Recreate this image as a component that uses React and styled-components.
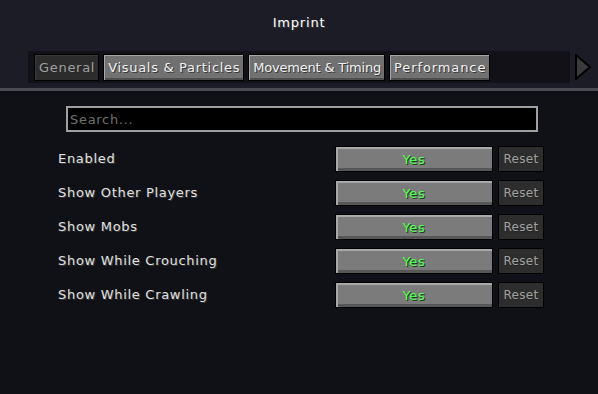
import { createGlobalStyle } from "styled-components"
import styled from "styled-components"

const GlobalStyle = createGlobalStyle`
  html, body {
    margin: 0;
    padding: 0;
    background: #101116;
  }
  body {
    font-family: "DejaVu Sans", "Liberation Sans", sans-serif;
    width: 598px;
    height: 394px;
    overflow: hidden;
  }
`

// spacing tuned so the tab widths line up with the pixel font widths
const tabs = [
  { label: "General", active: true, spacing: 0.7 },
  { label: "Visuals & Particles", spacing: 0.7 },
  { label: "Movement & Timing", spacing: -0.2 },
  { label: "Performance", spacing: 0.9 },
]

const options = [
  "Enabled",
  "Show Other Players",
  "Show Mobs",
  "Show While Crouching",
  "Show While Crawling",
]

export default function App() {
  return (
    <Screen>
      <GlobalStyle />
      <Header>
        <Title>Imprint</Title>
        <TabRow>
          <TabStrip>
            {tabs.map((t) => (
              <Tab key={t.label} $active={t.active} $spacing={t.spacing}>{t.label}</Tab>
            ))}
          </TabStrip>
          <Arrow width="16" height="26" viewBox="0 0 16 26">
            <path d="M1 1 L1 25 L15 13 Z" fill="#3a3a3c" stroke="#000" strokeWidth="2" strokeLinejoin="miter" />
          </Arrow>
        </TabRow>
      </Header>
      <Separator />
      <Body>
        <SearchBox>
          <SearchInput placeholder="Search..." />
        </SearchBox>
        <OptionList>
          {options.map((name) => (
            <OptionRow key={name}>
              <Label>{name}</Label>
              <ValueButton>Yes</ValueButton>
              <ResetButton>Reset</ResetButton>
            </OptionRow>
          ))}
        </OptionList>
      </Body>
    </Screen>
  )
}

const Screen = styled.div`
  width: 598px;
  height: 394px;
  display: flex;
  flex-direction: column;
  background: #101116;
`

const Header = styled.div`
  height: 88px;
  background: #1c1c26;
  display: flex;
  flex-direction: column;
  box-sizing: border-box;
  padding-top: 16px;
`

const Title = styled.div`
  text-align: center;
  color: #fff;
  font-size: 13px;
  letter-spacing: 0.8px;
  line-height: 14px;
  text-shadow: 1px 1px 0 #3f3f3f;
`

const TabRow = styled.div`
  margin-top: 21px;
  display: flex;
  align-items: center;
  padding-left: 28px;
  gap: 5px;
`

const TabStrip = styled.div`
  width: 542px;
  height: 32px;
  box-sizing: border-box;
  background: #111117;
  display: flex;
  align-items: center;
  gap: 4px;
  padding: 0 6px;
`

const Tab = styled.div`
  height: 27px;
  box-sizing: border-box;
  padding: 0 3px 0 4px;
  display: flex;
  align-items: center;
  white-space: nowrap;
  font-size: 13px;
  letter-spacing: ${(p) => p.$spacing}px;
  border: 1px solid #000;
  color: ${(p) => (p.$active ? "#a0a0a0" : "#f0f0f0")};
  background: ${(p) => (p.$active ? "#2c2c2c" : "#717171")};
  text-shadow: ${(p) => (p.$active ? "1px 1px 0 #282828" : "1px 1px 0 #3a3a3a")};
  box-shadow: ${(p) =>
    p.$active
      ? "inset 1px 1px 0 #3a3a3a"
      : "inset 1px 1px 0 #a8a8a8, inset 0 -2px 0 #4e4e4e"};
`

const Arrow = styled.svg`
  display: block;
`

const Separator = styled.div`
  height: 3px;
  background: #4a4a52;
  border-bottom: 1px solid #0c0c10;
`

const Body = styled.div`
  flex: 1;
  display: flex;
  flex-direction: column;
  padding-top: 14px;
`

const SearchBox = styled.div`
  margin-left: 66px;
  width: 472px;
  height: 26px;
  box-sizing: border-box;
  border: 2px solid #a0a0a0;
  background: #000;
  display: flex;
`

const SearchInput = styled.input`
  flex: 1;
  background: transparent;
  border: none;
  outline: none;
  color: #e0e0e0;
  font-family: inherit;
  font-size: 13px;
  letter-spacing: 0.7px;
  padding: 0 2px;
  &::placeholder {
    color: #707070;
  }
`

const OptionList = styled.div`
  margin-top: 14px;
  margin-left: 58px;
  width: 486px;
  display: flex;
  flex-direction: column;
  gap: 8px;
`

const OptionRow = styled.div`
  display: grid;
  grid-template-columns: 1fr 158px 46px;
  gap: 5px;
  height: 26px;
  align-items: center;
`

const Label = styled.div`
  color: #e0e0e0;
  font-size: 13px;
  letter-spacing: 0.7px;
  text-shadow: 1px 1px 0 #383838;
  margin-top: -2px;
`

const ValueButton = styled.div`
  height: 26px;
  box-sizing: border-box;
  border: 1px solid #000;
  background: #7b7b7b;
  box-shadow: inset 2px 2px 0 #a9a9a9, inset 0 -3px 0 #575757;
  display: flex;
  align-items: center;
  justify-content: center;
  color: #55ff55;
  font-size: 13px;
  letter-spacing: 0.7px;
  text-shadow: 1px 1px 0 #153f15;
`

const ResetButton = styled.div`
  height: 26px;
  box-sizing: border-box;
  border: 1px solid #000;
  background: #2d2d2d;
  display: flex;
  align-items: center;
  justify-content: center;
  color: #a0a0a0;
  font-size: 12px;
  letter-spacing: 0.3px;
  text-shadow: 1px 1px 0 #262626;
`
